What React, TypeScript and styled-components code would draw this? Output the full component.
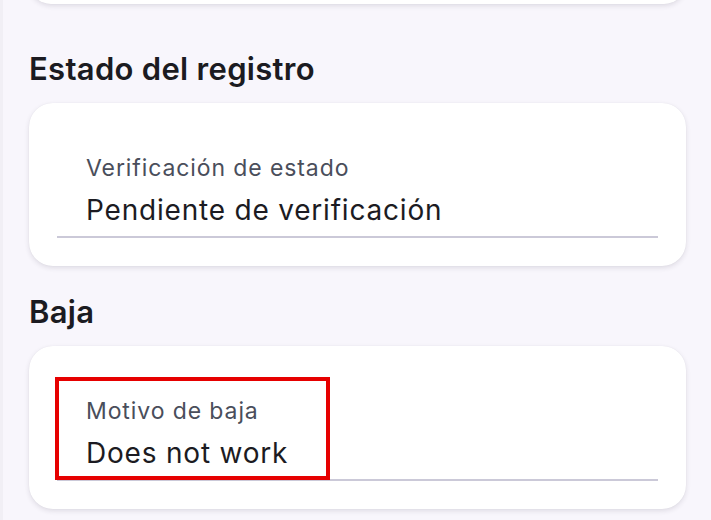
import React from "react"
import styled, { createGlobalStyle } from "styled-components"

const GlobalStyle = createGlobalStyle`
  html, body {
    margin: 0;
    padding: 0;
    background: #f8f6fc;
    font-family: Inter, "Noto Sans", sans-serif;
    overflow: hidden;
  }
`

const Page = styled.div`
  width: 711px;
  height: 520px;
  overflow: hidden;
  box-sizing: border-box;
  padding: 0 25px 0 29px;
  border-left: 3px solid #f1eff5;
`

const Card = styled.section<{ $clip?: boolean }>`
  background: #ffffff;
  border-radius: 24px;
  box-shadow: 0 2px 5px rgba(40, 36, 60, 0.12), 0 0 1px rgba(40, 36, 60, 0.08);
  padding: ${p => (p.$clip ? "0" : "42px 28px 28px")};
  height: ${p => (p.$clip ? "44px" : "auto")};
  margin-top: ${p => (p.$clip ? "-40px" : "0")};
  margin-left: -3px;
`

const Heading = styled.h2<{ $gap: number }>`
  margin: ${p => p.$gap}px 0 16px -3px;
  font-size: 31px;
  line-height: 36px;
  font-weight: 600;
  color: #1b1b21;
  letter-spacing: 0.3px;
`

const Field = styled.div`
  position: relative;
  padding: 9px 29px 9px;
  border-bottom: 2px solid #cbc9d8;
`

const Label = styled.div`
  font-size: 23px;
  line-height: 28px;
  color: #4a4e5b;
  letter-spacing: 0.9px;
`

const Value = styled.div`
  margin-top: 11px;
  font-size: 28px;
  line-height: 34px;
  color: #1c1b22;
  letter-spacing: 0.8px;
`

const Highlight = styled.div`
  position: absolute;
  left: -2px;
  top: -11px;
  width: 275px;
  height: 103px;
  box-sizing: border-box;
  border: 4px solid #e60000;
  pointer-events: none;
`

function TextField({ label, value, marked }: { label: string; value: string; marked?: boolean }) {
  return (
    <Field>
      <Label>{label}</Label>
      <Value>{value}</Value>
      {marked && <Highlight />}
    </Field>
  )
}

export default function App() {
  return (
    <>
      <GlobalStyle />
      <Page>
        <Card $clip />
        <Heading $gap={47}>Estado del registro</Heading>
        <Card>
          <TextField label="Verificación de estado" value="Pendiente de verificación" />
        </Card>
        <Heading $gap={28}>Baja</Heading>
        <Card>
          <TextField label="Motivo de baja" value="Does not work" marked />
        </Card>
      </Page>
    </>
  )
}
